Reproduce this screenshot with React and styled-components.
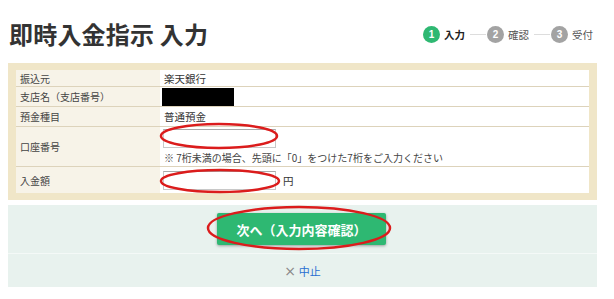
import styled, { createGlobalStyle } from "styled-components";

const GlobalStyle = createGlobalStyle`
  body {
    margin: 0;
    background: #fff;
    font-family: "Noto Sans CJK JP", "Noto Sans", sans-serif;
    color: #333;
  }
`;

const steps = [
  { n: 1, label: "入力", active: true },
  { n: 2, label: "確認" },
  { n: 3, label: "受付" },
];

export default function App() {
  return (
    <>
      <GlobalStyle />
      <Page>
        <Header>
          <Title>即時入金指示 入力</Title>
          <Steps>
            {steps.map((s, i) => (
              <Step key={s.n}>
                {i > 0 && <StepLine />}
                <StepNum $active={s.active}>{s.n}</StepNum>
                <StepLabel $active={s.active}>{s.label}</StepLabel>
              </Step>
            ))}
          </Steps>
        </Header>

        <FormBox>
          <Table>
            <Label>振込元</Label>
            <Value>楽天銀行</Value>

            <Label $h={20}>支店名（支店番号）</Label>
            <Value $h={20}>
              <Redacted />
            </Value>

            <Label $h={20}>預金種目</Label>
            <Value $h={20}>普通預金</Value>

            <Label $h={40}>口座番号</Label>
            <Value $h={40} $column>
              <Circled>
                <Input />
                <Ring width="122" height="30" $left={-6} $top={-8}>
                  <ellipse cx="61" cy="15" rx="58" ry="12" />
                </Ring>
              </Circled>
              <Note>※ 7桁未満の場合、先頭に「0」をつけた7桁をご入力ください</Note>
            </Value>

            <Label $h={26} $last>入金額</Label>
            <Value $h={26} $last>
              <Circled>
                <Input />
                <Ring width="126" height="28" $left={-6} $top={-3}>
                  <ellipse cx="62" cy="13" rx="59" ry="11" />
                </Ring>
              </Circled>
              <Yen>円</Yen>
            </Value>
          </Table>
        </FormBox>

        <Actions>
          <ButtonRow>
            <Circled>
              <NextButton>次へ（入力内容確認）</NextButton>
              <Ring width="188" height="48" $left={-12} $top={-9}>
                <ellipse cx="94" cy="24" rx="91" ry="21" />
              </Ring>
            </Circled>
          </ButtonRow>
          <CancelRow>
            <CancelX>×</CancelX>
            <CancelLink>中止</CancelLink>
          </CancelRow>
        </Actions>
      </Page>
    </>
  );
}

const Page = styled.div`
  width: 589px;
  padding: 0 17px 0 8px;
`;

const Header = styled.div`
  height: 59px;
  padding-top: 4px;
  display: flex;
  align-items: center;
  justify-content: space-between;
`;

const Title = styled.h1`
  margin: 0 0 0 1px;
  font-size: 24px;
  font-weight: 700;
  color: #333;
  letter-spacing: 0.2px;
`;

const Steps = styled.div`
  display: flex;
  align-items: center;
  margin-right: 4px;
  margin-top: 2px;
`;

const Step = styled.div`
  display: flex;
  align-items: center;
`;

const StepLine = styled.span`
  width: 16px;
  height: 1px;
  background: #ddd;
  margin: 0 1px 0 5px;
`;

const StepNum = styled.span`
  width: 17px;
  height: 17px;
  border-radius: 50%;
  background: ${(p) => (p.$active ? "#2eb872" : "#a3a3a3")};
  color: #fff;
  font-size: 10px;
  font-weight: 700;
  display: flex;
  align-items: center;
  justify-content: center;
  font-family: "Liberation Sans", sans-serif;
`;

const StepLabel = styled.span`
  margin-left: 4px;
  font-size: 10.5px;
  font-weight: ${(p) => (p.$active ? 700 : 400)};
  color: ${(p) => (p.$active ? "#222" : "#555")};
`;

const FormBox = styled.div`
  background: #f0e6c8;
  padding: 7px 8px;
`;

const Table = styled.div`
  display: grid;
  grid-template-columns: 144px 1fr;
  background: #fff;
`;

const Label = styled.div`
  height: ${(p) => p.$h || 17}px;
  box-sizing: border-box;
  background: #f7f3e8;
  border-bottom: ${(p) => (p.$last ? "none" : "1px solid #ddd3bb")};
  display: flex;
  align-items: center;
  padding-left: 4px;
  font-size: 10px;
  color: #444;
`;

const Value = styled.div`
  height: ${(p) => p.$h || 17}px;
  box-sizing: border-box;
  border-bottom: ${(p) => (p.$last ? "none" : "1px solid #ddd3bb")};
  display: flex;
  flex-direction: ${(p) => (p.$column ? "column" : "row")};
  justify-content: ${(p) => (p.$column ? "center" : "flex-start")};
  align-items: ${(p) => (p.$column ? "flex-start" : "center")};
  padding-left: 4px;
  font-size: 10.5px;
  color: #333;
`;

const Redacted = styled.div`
  width: 72px;
  height: 18px;
  background: #000;
  margin-left: -2px;
`;

const Circled = styled.div`
  position: relative;
  display: inline-flex;
`;

const Input = styled.div`
  width: 111px;
  height: 17px;
  margin-left: -1px;
  border: 1px solid #c8c8c8;
  border-top-color: #a9a9a9;
  background: #fff;
`;

const Ring = styled.svg`
  position: absolute;
  left: ${(p) => p.$left}px;
  top: ${(p) => p.$top}px;
  overflow: visible;
  pointer-events: none;

  ellipse {
    fill: none;
    stroke: #db1c1c;
    stroke-width: 2.5;
  }
`;

const Note = styled.div`
  margin-top: 2px;
  font-size: 10px;
  color: #444;
`;

const Yen = styled.span`
  margin-left: 7px;
  font-size: 10.5px;
`;

const Actions = styled.div`
  margin-top: 5px;
  background: #e8f2ee;
`;

const ButtonRow = styled.div`
  height: 48px;
  border-bottom: 1px solid #f4f9f7;
  display: flex;
  align-items: center;
  justify-content: center;
  padding-right: 2px;
`;

const NextButton = styled.button`
  width: 169px;
  height: 32px;
  border: none;
  border-radius: 2px;
  background: #2eb872;
  color: #fff;
  font-family: "Noto Sans CJK JP", sans-serif;
  font-size: 13px;
  font-weight: 700;
  box-shadow: 0 1px 3px rgba(0, 0, 0, 0.35);
  cursor: pointer;
`;

const CancelRow = styled.div`
  height: 33px;
  display: flex;
  align-items: center;
  justify-content: center;
  gap: 3px;
  font-size: 11px;
`;

const CancelX = styled.span`
  color: #888;
  font-size: 14px;
  line-height: 1;
  font-family: "DejaVu Sans", sans-serif;
`;

const CancelLink = styled.a`
  color: #2a6fd1;
  cursor: pointer;
`;
